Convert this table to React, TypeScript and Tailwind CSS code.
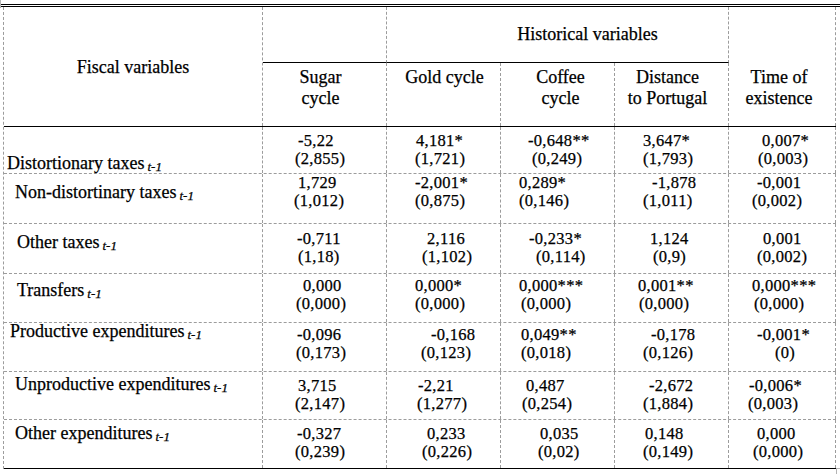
type Line = { t: string; ml: string };
type Row = {
  label: string;
  labelCls: string;
  rowCls: string;
  numPt: string;
  cells: Line[][];
  last?: boolean;
};

const rows: Row[] = [
  {
    label: 'Distortionary taxes',
    labelCls: 'pl-[3px] pt-[28px]',
    rowCls: 'h-[47px]',
    numPt: 'pt-[5px]',
    cells: [
      [{ t: '-5,22', ml: 'ml-[35px]' }, { t: '(2,855)', ml: 'ml-[32px]' }],
      [{ t: '4,181*', ml: 'ml-[29px]' }, { t: '(1,721)', ml: 'ml-[28px]' }],
      [{ t: '-0,648**', ml: 'ml-[27px]' }, { t: '(0,249)', ml: 'ml-[31px]' }],
      [{ t: '3,647*', ml: 'ml-[28px]' }, { t: '(1,793)', ml: 'ml-[28px]' }],
      [{ t: '0,007*', ml: 'ml-[33px]' }, { t: '(0,003)', ml: 'ml-[29px]' }],
    ],
  },
  {
    label: 'Non-distortinary taxes',
    labelCls: 'pl-[11px] pt-[10px]',
    rowCls: 'h-[50px]',
    numPt: 'pt-[0px]',
    cells: [
      [{ t: '1,729', ml: 'ml-[35px]' }, { t: '(1,012)', ml: 'ml-[31px]' }],
      [{ t: '-2,001*', ml: 'ml-[28px]' }, { t: '(0,875)', ml: 'ml-[28px]' }],
      [{ t: '0,289*', ml: 'ml-[18px]' }, { t: '(0,146)', ml: 'ml-[18px]' }],
      [{ t: '-1,878', ml: 'ml-[37px]' }, { t: '(1,011)', ml: 'ml-[28px]' }],
      [{ t: '-0,001', ml: 'ml-[28px]' }, { t: '(0,002)', ml: 'ml-[23px]' }],
    ],
  },
  {
    label: 'Other taxes',
    labelCls: 'pl-[13px] pt-[10px]',
    rowCls: 'h-[50px]',
    numPt: 'pt-[6px]',
    cells: [
      [{ t: '-0,711', ml: 'ml-[34px]' }, { t: '(1,18)', ml: 'ml-[35px]' }],
      [{ t: '2,116', ml: 'ml-[40px]' }, { t: '(1,102)', ml: 'ml-[35px]' }],
      [{ t: '-0,233*', ml: 'ml-[28px]' }, { t: '(0,114)', ml: 'ml-[35px]' }],
      [{ t: '1,124', ml: 'ml-[35px]' }, { t: '(0,9)', ml: 'ml-[38px]' }],
      [{ t: '0,001', ml: 'ml-[34px]' }, { t: '(0,002)', ml: 'ml-[28px]' }],
    ],
  },
  {
    label: 'Transfers',
    labelCls: 'pl-[13px] pt-[8px]',
    rowCls: 'h-[49px]',
    numPt: 'pt-[3px]',
    cells: [
      [{ t: '0,000', ml: 'ml-[40px]' }, { t: '(0,000)', ml: 'ml-[33px]' }],
      [{ t: '0,000*', ml: 'ml-[28px]' }, { t: '(0,000)', ml: 'ml-[28px]' }],
      [{ t: '0,000***', ml: 'ml-[18px]' }, { t: '(0,000)', ml: 'ml-[20px]' }],
      [{ t: '0,001**', ml: 'ml-[23px]' }, { t: '(0,000)', ml: 'ml-[24px]' }],
      [{ t: '0,000***', ml: 'ml-[23px]' }, { t: '(0,000)', ml: 'ml-[25px]' }],
    ],
  },
  {
    label: 'Productive expenditures',
    labelCls: 'pl-[6px] pt-[0px]',
    rowCls: 'h-[49px]',
    numPt: 'pt-[3px]',
    cells: [
      [{ t: '-0,096', ml: 'ml-[34px]' }, { t: '(0,173)', ml: 'ml-[33px]' }],
      [{ t: '-0,168', ml: 'ml-[44px]' }, { t: '(0,123)', ml: 'ml-[34px]' }],
      [{ t: '0,049**', ml: 'ml-[20px]' }, { t: '(0,018)', ml: 'ml-[20px]' }],
      [{ t: '-0,178', ml: 'ml-[36px]' }, { t: '(0,126)', ml: 'ml-[28px]' }],
      [{ t: '-0,001*', ml: 'ml-[28px]' }, { t: '(0)', ml: 'ml-[46px]' }],
    ],
  },
  {
    label: 'Unproductive expenditures',
    labelCls: 'pl-[11px] pt-[4px]',
    rowCls: 'h-[48px]',
    numPt: 'pt-[5px]',
    cells: [
      [{ t: '3,715', ml: 'ml-[35px]' }, { t: '(2,147)', ml: 'ml-[32px]' }],
      [{ t: '-2,21', ml: 'ml-[31px]' }, { t: '(1,277)', ml: 'ml-[30px]' }],
      [{ t: '0,487', ml: 'ml-[25px]' }, { t: '(0,254)', ml: 'ml-[21px]' }],
      [{ t: '-2,672', ml: 'ml-[34px]' }, { t: '(1,884)', ml: 'ml-[28px]' }],
      [{ t: '-0,006*', ml: 'ml-[20px]' }, { t: '(0,003)', ml: 'ml-[19px]' }],
    ],
  },
  {
    label: 'Other expenditures',
    labelCls: 'pl-[11px] pt-[5px]',
    rowCls: 'h-[49px]',
    numPt: 'pt-[5px]',
    last: true,
    cells: [
      [{ t: '-0,327', ml: 'ml-[34px]' }, { t: '(0,239)', ml: 'ml-[32px]' }],
      [{ t: '0,233', ml: 'ml-[40px]' }, { t: '(0,226)', ml: 'ml-[35px]' }],
      [{ t: '0,035', ml: 'ml-[39px]' }, { t: '(0,02)', ml: 'ml-[37px]' }],
      [{ t: '0,148', ml: 'ml-[30px]' }, { t: '(0,149)', ml: 'ml-[28px]' }],
      [{ t: '0,000', ml: 'ml-[28px]' }, { t: '(0,000)', ml: 'ml-[24px]' }],
    ],
  },
];

// dashed gridline on the right, solid rules are set per side
const dashR = 'border-r border-dashed border-r-[#9c9c9c]';
const solidB = 'border-b border-b-black [border-bottom-style:solid]';
const cols = 'grid grid-cols-[259px_124px_114px_114px_114px_107px]';

function Lag() {
  return <i className="relative top-[2px] ml-[3px] text-[13px]">t-1</i>;
}

export default function App() {
  return (
    <div className="relative h-[474px] w-[840px] overflow-hidden bg-white font-['Liberation_Serif','Times_New_Roman',serif] text-[18px] text-black [-webkit-text-stroke:0.25px_black]">
      {/* double top rule */}
      <div className="mt-[4px] h-[3px] w-[840px] border-y border-black" />

      <div className="ml-[3px] w-[833px] border-l border-dashed border-l-[#9c9c9c]">
        {/* header */}
        <div className={`${cols} grid-rows-[56px_63px] border-b border-black leading-[21px]`}>
          <div className={`row-span-2 flex items-center justify-center pt-[2px] ${dashR}`}>Fiscal variables</div>
          <div className={`${dashR} ${solidB}`} />
          <div className={`col-span-3 flex items-center justify-center pl-[60px] ${dashR} ${solidB}`}>
            Historical variables
          </div>
          <div className={`row-span-2 pt-[60px] pr-[6px] text-center ${dashR}`}>
            Time of
            <br />
            existence
          </div>
          <div className={`pt-[4px] pr-[8px] text-center ${dashR}`}>
            Sugar
            <br />
            cycle
          </div>
          <div className={`pt-[4px] pl-[2px] text-center ${dashR}`}>Gold cycle</div>
          <div className={`pt-[4px] pl-[6px] text-center ${dashR}`}>
            Coffee
            <br />
            cycle
          </div>
          <div className={`pt-[4px] pr-[8px] text-center ${dashR}`}>
            Distance
            <br />
            to Portugal
          </div>
        </div>

        {/* body */}
        {rows.map((r) => (
          <div
            key={r.label}
            className={`${cols} ${r.rowCls} border-b ${r.last ? 'border-b-black' : 'border-dashed border-b-[#9c9c9c]'}`}
          >
            <div className={`${r.labelCls} whitespace-nowrap leading-[17px] ${dashR}`}>
              {r.label}
              <Lag />
            </div>
            {r.cells.map((c, i) => (
              <div key={i} className={`${r.numPt} text-[16.5px] leading-[18px] tracking-[0.3px] ${dashR}`}>
                {c.map((l, j) => (
                  <div key={j} className={l.ml}>
                    {l.t}
                  </div>
                ))}
              </div>
            ))}
          </div>
        ))}
      </div>

      {/* little table handles drawn by the editor */}
      <div className="absolute left-0 top-0 h-[8px] w-[2px] border-l border-[#b5b5b5]" />
      <div className="absolute left-[836px] top-[468px] h-[6px] w-[4px] border-l border-t border-[#b5b5b5]" />
    </div>
  );
}
